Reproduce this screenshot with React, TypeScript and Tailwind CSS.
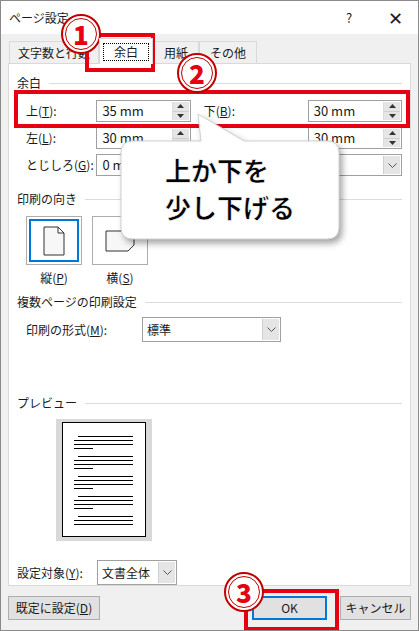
import React from 'react'

const font = { fontFamily: '"Noto Sans CJK JP", "Noto Sans", sans-serif' }

function Spin() {
  return (
    <div className="flex flex-col w-[17px] h-full border-l border-[#dcdcdc]">
      <div className="flex-1 flex items-center justify-center bg-[#e5e5e5] border-b border-[#cfcfcf]">
        <svg width="7" height="4" viewBox="0 0 7 4"><path d="M0 4 L3.5 0 L7 4Z" fill="#333" /></svg>
      </div>
      <div className="flex-1 flex items-center justify-center bg-[#e5e5e5]">
        <svg width="7" height="4" viewBox="0 0 7 4"><path d="M0 0 L3.5 4 L7 0Z" fill="#333" /></svg>
      </div>
    </div>
  )
}

function Caret() {
  return (
    <div className="w-[17px] h-full flex items-center justify-center bg-[#e5e5e5] border-l border-[#cfcfcf]">
      <svg width="9" height="5" viewBox="0 0 9 5"><path d="M0.5 0.5 L4.5 4.5 L8.5 0.5" stroke="#555" fill="none" /></svg>
    </div>
  )
}

function Spinner({ value, w = 'w-[95px]' }: { value: string; w?: string }) {
  return (
    <div className={`${w} h-[22px] border border-[#a0a0a0] bg-white flex items-stretch p-[1px]`}>
      <div className="flex-1 pl-1 text-[13px] leading-[18px]">{value}</div>
      <Spin />
    </div>
  )
}

function Group({ title }: { title: string }) {
  return (
    <div className="flex items-center gap-2 text-[12px] h-[18px]">
      <span>{title}</span>
      <div className="flex-1 h-px bg-[#dcdcdc]" />
    </div>
  )
}

function Circle({ n, x, y }: { n: string; x: number; y: number }) {
  return (
    <div className="absolute w-[40px] h-[40px] rounded-full bg-white border-2 border-[#c00000] flex items-center justify-center" style={{ left: x - 20, top: y - 20 }}>
      <div className="w-[32px] h-[32px] rounded-full border border-[#c00000] flex items-center justify-center text-[#e60012] text-[26px] font-black leading-none">{n}</div>
    </div>
  )
}

function Lines() {
  return (
    <div className="flex flex-col gap-[7px] pt-[13px] px-[11px]">
      {[0, 1, 2, 3].map(i => (
        <div key={i} className="flex flex-col gap-[3px]">
          <div className="h-px bg-black ml-[4px] w-[55px]" />
          <div className="h-px bg-black w-[59px]" />
          <div className="h-px bg-black w-[59px]" />
          <div className="h-px bg-black w-[19px]" />
        </div>
      ))}
      <div className="flex flex-col gap-[3px]">
        <div className="h-px bg-black ml-[4px] w-[55px]" />
        <div className="h-px bg-black w-[59px]" />
        <div className="h-px bg-black w-[59px]" />
      </div>
    </div>
  )
}

export default function App() {
  return (
    <div className="relative w-[419px] h-[631px] bg-[#f0f0f0] border border-[#8a8a8a] text-[#1a1a1a] overflow-hidden" style={font}>
      {/* Title bar */}
      <div className="h-[33px] bg-white flex items-center pl-2 text-[12px]">
        <span className="flex-1">ページ設定</span>
        <span className="w-[46px] text-center text-[13px]">?</span>
        <span className="w-[46px] text-center text-[18px] font-light">✕</span>
      </div>

      {/* Tabs */}
      <div className="flex items-end h-[29px] pl-[8px] text-[12px]">
        <div className="h-[22px] px-[8px] border border-[#d9d9d9] border-b-0 flex items-center bg-[#f0f0f0]">文字数と行数</div>
        <div className="h-[26px] w-[54px] bg-white border border-[#d9d9d9] border-b-0 flex items-center justify-center -mb-px relative z-10">
          <span className="border border-dotted border-black px-[10px] leading-[16px]">余白</span>
        </div>
        <div className="h-[22px] px-[10px] border border-[#d9d9d9] border-b-0 flex items-center">用紙</div>
        <div className="h-[22px] px-[10px] border border-[#d9d9d9] border-b-0 flex items-center">その他</div>
      </div>

      {/* Panel */}
      <div className="mx-[7px] h-[523px] bg-white border border-[#d9d9d9] px-[8px] pt-[10px] text-[12px]">
        <Group title="余白" />
        <div className="pl-[9px] pt-[8px] flex flex-col gap-[5px]">
          <div className="flex items-center h-[22px]">
            <span className="w-[71px]">上(<u>T</u>):</span>
            <Spinner value="35 mm" />
            <span className="w-[118px] pl-[13px]">下(<u>B</u>):</span>
            <Spinner value="30 mm" />
          </div>
          <div className="flex items-center h-[22px]">
            <span className="w-[71px]">左(<u>L</u>):</span>
            <Spinner value="30 mm" />
            <span className="w-[118px] pl-[13px]">右(<u>R</u>):</span>
            <Spinner value="30 mm" />
          </div>
          <div className="flex items-center h-[22px]">
            <span className="w-[71px]">とじしろ(<u>G</u>):</span>
            <Spinner value="0 mm" />
            <span className="w-[118px] pl-[13px]">とじしろの位置(<u>U</u>):</span>
            <div className="w-[95px] h-[22px] border border-[#a0a0a0] bg-white flex p-[1px]">
              <div className="flex-1 pl-1">左</div>
              <Caret />
            </div>
          </div>
        </div>

        <div className="mt-[14px]"><Group title="印刷の向き" /></div>
        <div className="pl-[9px] pt-[8px] flex gap-[10px]">
          <div className="flex flex-col items-center gap-[4px]">
            <div className="w-[56px] h-[49px] border border-[#adadad] p-[2px]">
              <div className="w-full h-full border-2 border-[#0078d7] flex items-center justify-center">
                <svg width="22" height="30" viewBox="0 0 22 30"><path d="M1 1 H15 L21 7 V29 H1Z M15 1 V7 H21" fill="#f7f7f7" stroke="#333" /></svg>
              </div>
            </div>
            <span>縦(<u>P</u>)</span>
          </div>
          <div className="flex flex-col items-center gap-[4px]">
            <div className="w-[56px] h-[49px] border border-[#adadad] flex items-center justify-center">
              <svg width="30" height="22" viewBox="0 0 30 22"><path d="M1 1 H29 V15 L23 21 H1Z" fill="#f7f7f7" stroke="#333" /></svg>
            </div>
            <span>横(<u>S</u>)</span>
          </div>
        </div>

        <div className="mt-[6px]"><Group title="複数ページの印刷設定" /></div>
        <div className="pl-[9px] pt-[6px] flex items-center">
          <span className="w-[116px]">印刷の形式(<u>M</u>):</span>
          <div className="w-[139px] h-[25px] border border-[#a0a0a0] bg-white flex p-[1px]">
            <div className="flex-1 pl-[3px] leading-[21px]">標準</div>
            <Caret />
          </div>
        </div>

        <div className="mt-[52px]"><Group title="プレビュー" /></div>
        <div className="ml-[39px] mt-[7px] w-[96px] h-[122px] bg-[#d9d9d9] p-[6px] pt-[3px]">
          <div className="w-[84px] h-[115px] bg-white border border-black"><Lines /></div>
        </div>

        <div className="mt-[19px] flex items-center">
          <span className="w-[80px]">設定対象(<u>Y</u>):</span>
          <div className="w-[80px] h-[25px] border border-[#a0a0a0] bg-white flex p-[1px]">
            <div className="flex-1 pl-[3px] leading-[21px]">文書全体</div>
            <Caret />
          </div>
        </div>
      </div>

      {/* Buttons */}
      <div className="flex items-center px-[7px] pt-[10px] text-[12px]">
        <div className="w-[92px] h-[24px] bg-[#e1e1e1] border border-[#adadad] flex items-center justify-center">既定に設定(<u>D</u>)</div>
        <div className="flex-1" />
        <div className="w-[75px] h-[24px] bg-[#e1e1e1] border-2 border-[#0078d7] flex items-center justify-center">OK</div>
        <div className="w-[13px]" />
        <div className="w-[71px] h-[24px] bg-[#e1e1e1] border border-[#adadad] flex items-center justify-center">キャンセル</div>
      </div>

      {/* Annotations */}
      <div className="absolute left-[84px] top-[32px] w-[70px] h-[39px] border-[4px] border-[#e60012]" />
      <div className="absolute left-[13px] top-[89px] w-[396px] h-[38px] border-[4px] border-[#e60012]" />
      <div className="absolute left-[243px] top-[588px] w-[95px] h-[42px] border-[4px] border-[#e60012]" />

      <svg className="absolute left-0 top-0" width="419" height="300" style={{ filter: 'drop-shadow(3px 4px 3px rgba(0,0,0,0.35))' }}>
        <path d="M132 140 H200 L197 113 L243 140 H326 Q338 140 338 152 V226 Q338 238 326 238 H132 Q120 238 120 226 V152 Q120 140 132 140Z" fill="white" stroke="#d0d0d0" />
      </svg>
      <div className="absolute left-[120px] top-[150px] w-[218px] pl-[44px] text-[26px] font-bold leading-[37px] text-black" style={{ WebkitTextStroke: '0.5px white' }}>
        <div>上か下を</div>
        <div>少し下げる</div>
      </div>

      <Circle n="1" x={80} y={33} />
      <Circle n="2" x={196} y={72} />
      <Circle n="3" x={243} y={591} />
    </div>
  )
}
